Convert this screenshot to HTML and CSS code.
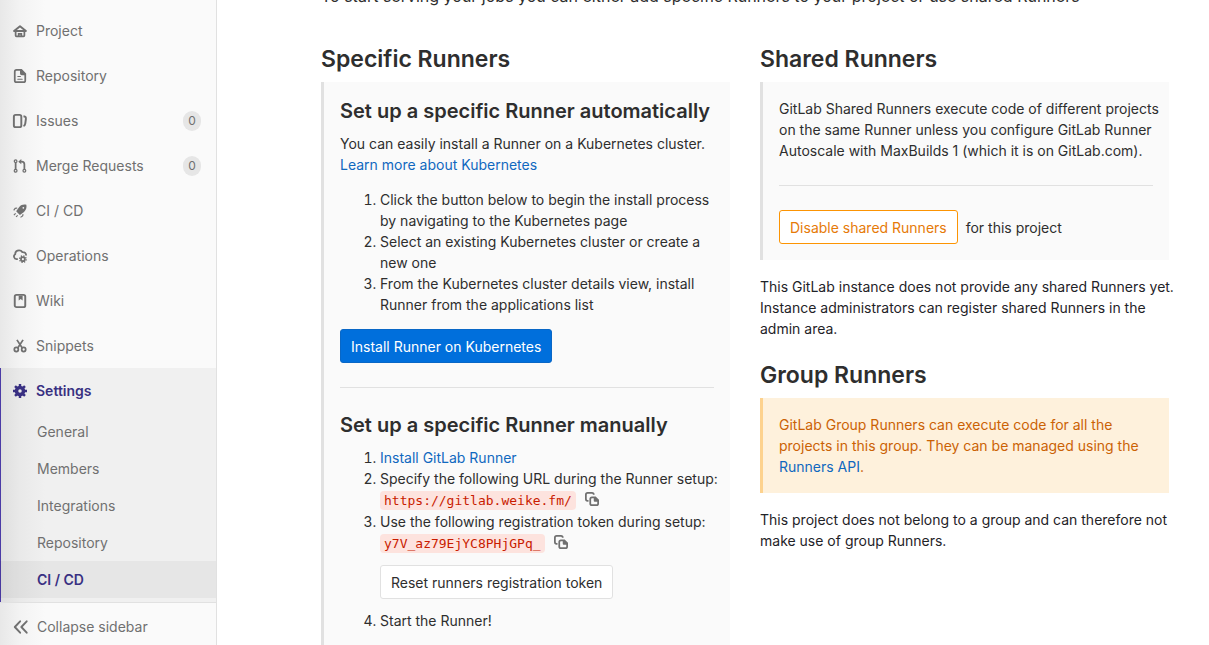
FILE: index.html
```
<!DOCTYPE html>
<html lang="en">
<head>
<meta charset="utf-8">
<title>CI / CD Settings</title>
<link rel="stylesheet" href="styles.css">
</head>
<body>
<svg class="sprite" aria-hidden="true">
  <symbol id="copy" viewBox="0 0 16 16">
    <path d="M4 10H3a2 2 0 0 1-2-2V3a2 2 0 0 1 2-2h5a2 2 0 0 1 2 2" fill="none" stroke="currentColor" stroke-width="2"/>
    <path fill="currentColor" fill-rule="evenodd" d="M8 5h4.200L16 8.800V13a3 3 0 0 1-3 3H8a3 3 0 0 1-3-3V8a3 3 0 0 1 3-3zm0 2a1 1 0 0 0-1 1v5a1 1 0 0 0 1 1h5a1 1 0 0 0 1-1v-2h-3a1 1 0 0 1-1-1V7z"/>
  </symbol>
</svg>
<aside class="sidebar">
  <nav class="nav" aria-label="Project">
    <a class="nav-item" href="#"><svg class="icon" viewBox="0 0 16 16"><path d="M1.200 8 8 2.500 14.800 8z" fill="none" stroke="currentColor" stroke-width="2.200" stroke-linejoin="round"/><path d="M3 8v5a1 1 0 0 0 1 1h8a1 1 0 0 0 1-1V8M6.500 14v-2.800h3V14" fill="none" stroke="currentColor" stroke-width="2"/></svg><span>Project</span></a>
    <a class="nav-item" href="#"><svg class="icon" viewBox="0 0 16 16"><path fill="currentColor" fill-rule="evenodd" d="M4 0h6l5 5v8a3 3 0 0 1-3 3H4a3 3 0 0 1-3-3V3a3 3 0 0 1 3-3zm0 2a1 1 0 0 0-1 1v10a1 1 0 0 0 1 1h8a1 1 0 0 0 1-1V7h-3a2 2 0 0 1-2-2V2zM5.500 8h3a.5.5 0 0 1 0 1.200h-3a.5.5 0 0 1 0-1.200zm0 3h5a.5.5 0 0 1 0 1.200h-5a.5.5 0 0 1 0-1.200z"/></svg><span>Repository</span></a>
    <a class="nav-item" href="#"><svg class="icon" viewBox="0 0 16 16"><rect x="1" y="1" width="8.500" height="14" rx="2" fill="none" stroke="currentColor" stroke-width="2.200"/><path d="M12 2.500c2.500.3 3 1.300 2.700 3.500l-.7 5c-.2 1.500-.8 2.300-2 2.800" fill="none" stroke="currentColor" stroke-width="2.200"/></svg><span>Issues</span><span class="count">0</span></a>
    <a class="nav-item" href="#"><svg class="icon" viewBox="0 0 16 16"><g fill="none" stroke="currentColor" stroke-width="1.400"><circle cx="3" cy="2.500" r="1.500"/><circle cx="3" cy="13.500" r="1.600"/><circle cx="13" cy="13.500" r="1.600"/></g><path d="M3 4v8M13 12V6a3 3 0 0 0-3-3H8" fill="none" stroke="currentColor" stroke-width="2"/><path fill="currentColor" d="M6 3 9.500 0v6z"/></svg><span>Merge Requests</span><span class="count">0</span></a>
    <a class="nav-item" href="#"><svg class="icon" viewBox="0 0 16 16"><path fill="currentColor" fill-rule="evenodd" d="M15.300.9c-3.500-.6-6 .1-8.200 2.500L3.600 8.200l4.300 4.300 4.700-3.500c2.400-2.200 3.200-4.600 2.700-8.100zM11.800 3.300a1 1 0 1 1 0 2 1 1 0 0 1 0-2z"/><path d="M4.800 4.500 2.500 5 .8 7.200M11.600 11.700 11 13.700l-2.400 1.600M3 10.800 1 12.800M5.300 13l-1.800 1.800" fill="none" stroke="currentColor" stroke-width="1.300"/></svg><span>CI / CD</span></a>
    <a class="nav-item" href="#"><svg class="icon" viewBox="0 0 16 16"><path d="M5.500 11.500H4A3 3 0 0 1 2.500 6C2.500 3 4.500 1.500 7 1.500c2 0 3 1 3.600 2C13.500 3.300 15 5 15 7.500" fill="none" stroke="currentColor" stroke-width="2.100"/><circle cx="11.300" cy="11.600" r="2.200" fill="none" stroke="currentColor" stroke-width="2"/><circle cx="11.300" cy="11.600" r="3.700" fill="none" stroke="currentColor" stroke-width="1.600" stroke-dasharray="1.500 1.406"/></svg><span>Operations</span></a>
    <a class="nav-item" href="#"><svg class="icon" viewBox="0 0 16 16"><rect x="2" y="1" width="12" height="14" rx="2" fill="none" stroke="currentColor" stroke-width="2.200"/><path fill="currentColor" d="M6.500 2h4.500v5.500L8.800 5.800 6.500 7.500z"/></svg><span>Wiki</span></a>
    <a class="nav-item" href="#"><svg class="icon" viewBox="0 0 16 16"><g fill="none" stroke="currentColor" stroke-width="2"><circle cx="3.800" cy="12" r="2.300"/><circle cx="12.200" cy="12" r="2.300"/><path d="M4.500 1 10.800 10.500M11.500 1 5.200 10.500"/></g></svg><span>Snippets</span></a>
    <div class="nav-group">
      <a class="nav-item current" href="#"><svg class="icon" viewBox="0 0 16 16"><circle cx="8" cy="8" r="4" fill="none" stroke="currentColor" stroke-width="4"/><path d="M8 0v3M8 13v3M0 8h3M13 8h3M2.300 2.300l2.200 2.200M11.500 11.500l2.200 2.200M2.300 13.700l2.200-2.200M11.500 4.500l2.200-2.200" stroke="currentColor" stroke-width="2.800"/></svg><span>Settings</span></a>
      <a class="sub-item" href="#">General</a>
      <a class="sub-item" href="#">Members</a>
      <a class="sub-item" href="#">Integrations</a>
      <a class="sub-item" href="#">Repository</a>
      <a class="sub-item selected" href="#">CI / CD</a>
    </div>
  </nav>
  <button class="collapse" type="button"><svg class="icon" viewBox="0 0 16 16"><path d="M7 1.500.9 8 7 14.500M14.500 1.500 8.400 8l6.100 6.500" fill="none" stroke="currentColor" stroke-width="2.200" stroke-linecap="round" stroke-linejoin="round"/></svg><span>Collapse sidebar</span></button>
</aside>
<main class="content">
  <p class="intro">To start serving your jobs you can either add specific Runners to your project or use shared Runners</p>
  <div class="columns">
    <section>
      <h2 class="title">Specific Runners</h2>
      <div class="callout">
        <h3 class="subtitle">Set up a specific Runner automatically</h3>
        <p>You can easily install a Runner on a Kubernetes cluster. <a href="#">Learn more about Kubernetes</a></p>
        <ol class="steps">
          <li>Click the button below to begin the install process by navigating to the Kubernetes page</li>
          <li>Select an existing Kubernetes cluster or create a new one</li>
          <li>From the Kubernetes cluster details view, install Runner from the applications list</li>
        </ol>
        <button class="btn primary" type="button">Install Runner on Kubernetes</button>
        <hr class="rule">
        <h3 class="subtitle">Set up a specific Runner manually</h3>
        <ol class="steps manual">
          <li><a href="#">Install GitLab Runner</a></li>
          <li>Specify the following URL during the Runner setup:
            <div class="value"><code>https://gitlab.weike.fm/</code><button class="copy" type="button" aria-label="Copy URL"><svg class="icon"><use href="#copy"/></svg></button></div></li>
          <li>Use the following registration token during setup:
            <div class="value"><code>y7V_az79EjYC8PHjGPq_</code><button class="copy" type="button" aria-label="Copy token"><svg class="icon"><use href="#copy"/></svg></button></div>
            <button class="btn reset" type="button">Reset runners registration token</button></li>
          <li>Start the Runner!</li>
        </ol>
      </div>
    </section>
    <section>
      <h2 class="title">Shared Runners</h2>
      <div class="callout">
        <p class="lines">GitLab Shared Runners execute code of different projects<br>on the same Runner unless you configure GitLab Runner<br>Autoscale with MaxBuilds 1 (which it is on GitLab.com).</p>
        <hr class="rule">
        <div class="toggle"><button class="btn warn" type="button">Disable shared Runners</button><span>for this project</span></div>
      </div>
      <p class="note lines">This GitLab instance does not provide any shared Runners yet.<br>Instance administrators can register shared Runners in the<br>admin area.</p>
      <h2 class="title group">Group Runners</h2>
      <div class="callout warning">
        <p>GitLab Group Runners can execute code for all the projects in this group. They can be managed using the <a href="#">Runners API</a>.</p>
      </div>
      <p class="note">This project does not belong to a group and can therefore not make use of group Runners.</p>
    </section>
  </div>
</main>
</body>
</html>
```
FILE: styles.css
```
* { box-sizing: border-box; }
body {
  margin: 0;
  display: flex;
  height: 100vh;
  overflow: hidden;
  background: #fff;
  color: #2e2e2e;
  font: 14px/21px Inter, "Liberation Sans", sans-serif;
}
h2, h3, p, ol { margin: 0; }
a { color: #1068bf; text-decoration: none; }
button { font: inherit; cursor: pointer; }
.sprite { position: absolute; width: 0; height: 0; }
.icon { width: 14px; height: 14px; flex: none; display: block; overflow: visible; }

.sidebar {
  flex: none;
  width: 217px;
  padding-top: 8px;
  display: flex;
  flex-direction: column;
  overflow: hidden;
  border-right: 1px solid #e1e1e1;
  background: linear-gradient(90deg, #e8e8e8, #f3f3f3 20px, #fafafa 45px);
  color: #707070;
}
.nav-item {
  display: flex;
  align-items: center;
  gap: 9px;
  padding: 12px 15px 12px 13px;
  color: inherit;
}
.count {
  margin-left: auto;
  width: 18px;
  border-radius: 10px;
  background: #e6e6e6;
  text-align: center;
  font-size: 12px;
  line-height: 20px;
}
.nav-group {
  padding-bottom: 4px;
  background: rgba(0, 0, 0, 0.04);
  box-shadow: inset 1px 0 #4b3ba6;
}
.sub-item {
  display: block;
  padding: 8px 16px 8px 37px;
  color: inherit;
}
.current, .selected { color: #393082; font-weight: 600; }
.selected { background: rgba(0, 0, 0, 0.04); }
.collapse {
  flex: none;
  display: flex;
  align-items: center;
  gap: 9px;
  height: 48px;
  padding: 0 14px;
  border: 0;
  border-top: 1px solid #e1e1e1;
  background: none;
  color: inherit;
}

.content {
  flex: 1;
  min-width: 0;
  margin-top: -16px;
  padding: 0 40px 0 104px;
}
.intro { font-size: 16px; line-height: 24px; }
.columns {
  display: grid;
  grid-template-columns: repeat(2, minmax(0, 1fr));
  gap: 30px;
  margin-top: 36px;
}
.title {
  margin-bottom: 8px;
  font-size: 23px;
  line-height: 30px;
  font-weight: 600;
}
.callout {
  padding: 16px;
  border-left: 3px solid #e1e1e1;
  background: #fafafa;
}
.subtitle {
  margin-bottom: 9px;
  font-size: 20px;
  line-height: 26px;
  font-weight: 600;
}
.steps { margin: 14px 0; padding-left: 40px; }
.steps.manual { margin-top: 0; white-space: nowrap; }
.lines { white-space: nowrap; }
.btn {
  height: 34px;
  padding: 0 10px;
  border: 1px solid #e1e1e1;
  border-radius: 3px;
  background: #fff;
  color: #2e2e2e;
}
.primary { border-color: #0967c6; background: #006fdc; color: #fff; }
.warn { border-color: #fc9403; color: #e67a08; }
.rule {
  margin: 24px 0;
  border: 0;
  border-top: 1px solid #e1e1e1;
}
.value { display: flex; align-items: center; gap: 9px; height: 22px; }
code {
  padding: 0 4px;
  border-radius: 4px;
  background: #fde3de;
  color: #c91c00;
  font: 13px/19px "DejaVu Sans Mono", "Liberation Mono", monospace;
}
.copy { padding: 0 0 2px; border: 0; background: none; color: #707070; }
.reset { display: block; margin: 11px 0; }
.toggle { display: flex; align-items: center; gap: 8px; }
.note { margin: 16px 0; color: #1f2328; }
.title.group { margin-top: 21px; }
.warning { border-color: #fdd28e; background: #fef1dc; color: #cb6205; }
```
